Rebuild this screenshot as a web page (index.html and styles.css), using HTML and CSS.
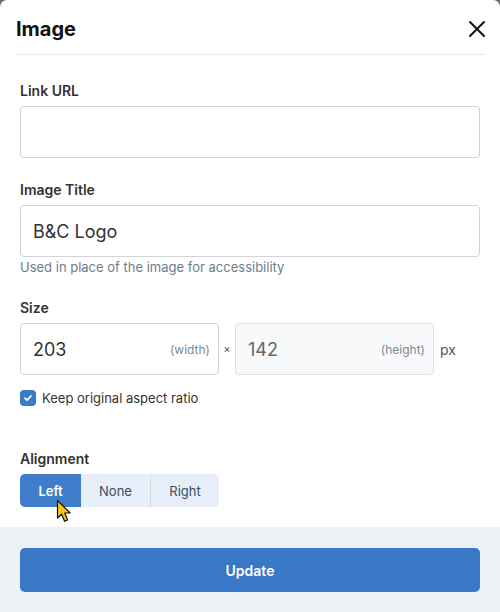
FILE: index.html
```html
<!DOCTYPE html>
<html>
<head>
<meta charset="utf-8">
<link rel="stylesheet" href="styles.css">
</head>
<body>
<div class="dialog">
  <div class="header">
    <h1 class="title">Image</h1>
    <button class="close" aria-label="Close">
      <svg width="18" height="18" viewBox="0 0 18 18"><path d="M2 2 L16 16 M16 2 L2 16" stroke="#111" stroke-width="2" stroke-linecap="round"/></svg>
    </button>
  </div>
  <div class="body">
    <div class="field">
      <label class="label">Link URL</label>
      <div class="input"></div>
    </div>
    <div class="field">
      <label class="label">Image Title</label>
      <div class="input"><span class="value">B&amp;C Logo</span></div>
      <div class="help">Used in place of the image for accessibility</div>
    </div>
    <div class="field">
      <label class="label">Size</label>
      <div class="size-row">
        <div class="input size"><span class="value">203</span><span class="unit">(width)</span></div>
        <span class="times">×</span>
        <div class="input size disabled"><span class="value muted">142</span><span class="unit">(height)</span></div>
        <span class="px">px</span>
      </div>
      <div class="check-row">
        <span class="checkbox">
          <svg width="10" height="10" viewBox="0 0 10 10"><path d="M2 5.2 L4.1 7.2 L8 3" fill="none" stroke="#fff" stroke-width="1.8" stroke-linecap="round" stroke-linejoin="round"/></svg>
        </span>
        <span class="check-label">Keep original aspect ratio</span>
      </div>
    </div>
    <div class="field align-field">
      <label class="label">Alignment</label>
      <div class="segmented">
        <span class="seg active seg-left">Left</span>
        <span class="seg seg-none">None</span>
        <span class="seg seg-right">Right</span>
        <svg class="cursor" width="18" height="26" viewBox="0 0 18 26"><path d="M1.5 1.5 L1.5 19 L5.6 15.2 L8.6 22.3 L11.6 21 L8.7 14 L14.2 14 Z" fill="#f5c518" stroke="#111" stroke-width="1.2" stroke-linejoin="round"/></svg>
      </div>
    </div>
  </div>
  <div class="footer">
    <button class="update">Update</button>
  </div>
</div>
</body>
</html>
```

FILE: styles.css
```css
* { box-sizing: border-box; }
html, body { margin: 0; padding: 0; }
body {
  background: #6e6e6e;
  font-family: Inter, "Noto Sans", sans-serif;
  color: #333;
  width: 500px;
  height: 612px;
  overflow: hidden;
}
.dialog {
  width: 500px;
  height: 612px;
  background: #fff;
  border-radius: 7px 7px 0 0;
  display: flex;
  flex-direction: column;
}
.header {
  margin: 0 14px 0 16px;
  height: 55px;
  border-bottom: 1px solid #e6e9ec;
  display: flex;
  align-items: center;
  justify-content: space-between;
}
.title {
  margin: 0;
  font-size: 20px;
  font-weight: 700;
  color: #111;
  line-height: 24px;
  padding-top: 4px;
}
.close {
  border: 0;
  background: none;
  padding: 0;
  width: 18px;
  height: 18px;
  margin-top: 3px;
  display: flex;
}
.body {
  padding: 26px 20px 20px;
  flex: 1;
  display: flex;
  flex-direction: column;
}
.field { display: flex; flex-direction: column; margin-bottom: 22px; }
.label {
  font-size: 14px;
  line-height: 20px;
  font-weight: 600;
  color: #333;
  margin-bottom: 5px;
}
.input {
  height: 52px;
  border: 1px solid #cfd3d7;
  border-radius: 4px;
  display: flex;
  align-items: center;
  padding: 0 8px 0 12px;
  background: #fff;
}
.value { font-size: 18px; color: #333; flex: 1; }
.value.muted { color: #666; }
.help {
  margin-top: 1px;
  font-size: 13px;
  line-height: 18px;
  color: #6f7c8a;
}
.size-row { display: flex; align-items: center; }
.input.size { width: 199px; }
.input.disabled { background: #f7f9fb; border-color: #dde1e5; }
.unit { font-size: 12px; color: #7d8896; }
.times { width: 16px; text-align: center; font-size: 11px; color: #555; }
.px { font-size: 14px; color: #555; margin-left: 6px; }
.check-row {
  display: flex;
  align-items: center;
  margin-top: 15px;
}
.checkbox {
  width: 16px;
  height: 16px;
  border-radius: 4px;
  background: #3b7ac7;
  display: flex;
  align-items: center;
  justify-content: center;
}
.check-label { font-size: 13px; color: #333; margin-left: 6px; }
.align-field { margin-top: 21px; margin-bottom: 0; }
.segmented {
  position: relative;
  display: flex;
  width: 199px;
  height: 33px;
  background: #e6eef8;
  border-radius: 5px;
}
.seg {
  display: flex;
  align-items: center;
  justify-content: center;
  font-size: 13px;
  color: #3b4d63;
}
.seg-left { width: 61px; }
.seg-none { width: 69px; }
.seg-right { width: 69px; border-left: 1px solid #d2dbe6; }
.seg.active {
  background: #3f7dcb;
  color: #fff;
  font-weight: 600;
  border-radius: 5px 0 0 5px;
}
.cursor { position: absolute; left: 36px; top: 25px; }
.footer {
  height: 85px;
  background: #edf1f5;
  padding: 21px 20px 20px;
}
.update {
  width: 460px;
  height: 44px;
  border: 0;
  border-radius: 5px;
  background: #3878c7;
  color: #fff;
  font-family: Inter, "Noto Sans", sans-serif;
  font-size: 14px;
  font-weight: 600;
}
```
